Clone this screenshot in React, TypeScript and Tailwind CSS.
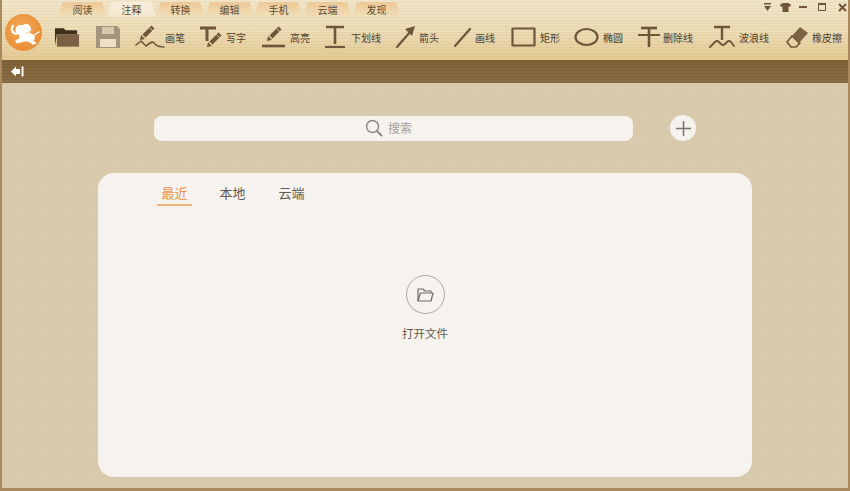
import React from "react"

const font = "font-['Noto_Sans_CJK_SC','Noto_Sans',sans-serif]"
const brown = "#6f5639"

const tabs = ["阅读", "注释", "转换", "编辑", "手机", "云端", "发现"]

const Ink: React.FC<{ w?: number; h?: number; children: React.ReactNode; sw?: number }> = ({ w = 30, h = 26, sw = 2.2, children }) => (
    <svg width={w} height={h} viewBox={`0 0 ${w} ${h}`} fill="none" stroke={brown} strokeWidth={sw} strokeLinecap="round" strokeLinejoin="round">
        {children}
    </svg>
)

// small slanted pencil, used by a few of the tools
const Pencil: React.FC<{ x: number; y: number }> = ({ x, y }) => (
    <g transform={`translate(${x} ${y})`}>
        <path d="M0 15 L1 10 L5 14 Z" fill={brown} stroke="none" />
        <path d="M4 11 L13 2" stroke={brown} strokeWidth={4.2} strokeLinecap="butt" />
        <path d="M9.5 2.5 L13.5 6.5" stroke="#e9d8b0" strokeWidth={0.9} strokeLinecap="butt" />
    </g>
)

const tools: { label: string; w: number; cell: number; icon: React.ReactNode }[] = [
    {
        label: "画笔", w: 64, cell: 30,
        icon: <Ink><Pencil x={5} y={1} /><path d="M1 21 L6 17 L11 22 L15 19 Q18 17 20 20 Q23 23 29 23" strokeWidth={1.6} /></Ink>,
    },
    {
        label: "写字", w: 62, cell: 27,
        icon: <Ink w={25}><path d="M1 4 H17 M8 4 V17" strokeWidth={3} strokeLinecap="butt" /><Pencil x={8} y={8} /></Ink>,
    },
    {
        label: "高亮", w: 63, cell: 29,
        icon: <Ink w={25}><Pencil x={6} y={2} /><path d="M1 22 H24" strokeWidth={2.6} strokeLinecap="butt" /></Ink>,
    },
    {
        label: "下划线", w: 71, cell: 27,
        icon: <Ink w={22}><path d="M2 3 H20 M11 3 V20" strokeWidth={2.6} strokeLinecap="butt" /><path d="M1 23 H21" strokeWidth={2.2} strokeLinecap="butt" /></Ink>,
    },
    {
        label: "箭头", w: 58, cell: 24,
        icon: <Ink w={21}><path d="M2 23 L16 7" strokeWidth={2.2} /><path d="M10 5 L20 2 L17 12 Z" fill={brown} stroke="none" /></Ink>,
    },
    {
        label: "画线", w: 58, cell: 22,
        icon: <Ink w={19}><path d="M2 22 L17 5" strokeWidth={2.2} /></Ink>,
    },
    {
        label: "矩形", w: 63, cell: 29,
        icon: <Ink w={25}><rect x="1.5" y="4.5" width="22" height="17" strokeWidth={2.2} strokeLinecap="butt" /></Ink>,
    },
    {
        label: "椭圆", w: 64, cell: 29,
        icon: <Ink w={25}><ellipse cx="12.5" cy="13" rx="11" ry="8" /></Ink>,
    },
    {
        label: "删除线", w: 71, cell: 25,
        icon: <Ink w={22}><path d="M3 4 H19" strokeWidth={2.6} strokeLinecap="butt" /><path d="M0 11 H22" strokeWidth={2} strokeLinecap="butt" /><path d="M11 4 V23" strokeWidth={2.6} strokeLinecap="butt" /></Ink>,
    },
    {
        label: "波浪线", w: 76, cell: 30,
        icon: <Ink w={26}><path d="M5 3 H21 M13 3 V16" strokeWidth={2.4} strokeLinecap="butt" /><path d="M1 23 L6 18 Q8 16 10 18 L12 20 Q14 22 16 20 L18 18 Q20 16 22 18 L25 22" strokeWidth={1.8} /></Ink>,
    },
    {
        label: "橡皮擦", w: 63, cell: 27,
        icon: <Ink w={24}><path d="M7 12 L15 3 L23 9 L14 19 Z" fill="#7d6444" stroke="none" /><path d="M7 12 L2 18 L6 23 H11 L15 19" strokeWidth={1.6} /><path d="M7 12 L14 19" strokeWidth={1.2} /></Ink>,
    },
]

const App: React.FC = () => {
    return (
        <div className={`w-[850px] h-[491px] overflow-hidden border-x-2 border-b-[3px] border-[#a98a5c] flex flex-col bg-[#d9caae] ${font}`}>
            {/* ribbon */}
            <div className="h-[60px] shrink-0 relative border-t-2 border-[#efe3c8] bg-[repeating-linear-gradient(0deg,rgba(120,90,40,0.06)_0px,rgba(120,90,40,0.06)_1px,transparent_1px,transparent_3px),linear-gradient(180deg,#f1e5c8_0%,#ecdcb5_50%,#e3ca93_100%)]">
                <div className="flex pl-[56px] h-[15px]">
                    {tabs.map((t) => (
                        <div
                            key={t}
                            className={`w-[49px] h-[15px] flex items-center justify-center text-[10px] text-[#5d4c36] [clip-path:polygon(10%_0,90%_0,100%_100%,0_100%)] ${t === "注释" ? "bg-[linear-gradient(180deg,#f7efdc,#f3e7cd)]" : "bg-[linear-gradient(180deg,#efc896,#efdfba)]"}`}
                        >
                            {t}
                        </div>
                    ))}
                </div>

                <div className="absolute right-[1px] -top-[2px] flex items-center gap-[8px] h-[14px]">
                    <svg width="9" height="9" viewBox="0 0 9 9" fill={brown}><path d="M1 0 H8 V1.5 H1 Z M1 3 H8 L4.5 8 Z" /></svg>
                    <svg width="11" height="9" viewBox="0 0 11 9" fill={brown}><path d="M0 1.5 L3 0 H8 L11 1.5 L10 4 L8.5 3.5 V9 H2.5 V3.5 L1 4 Z" /></svg>
                    <div className="w-[8px] h-[2px] bg-[#6f5639]" />
                    <div className="w-[8px] h-[8px] ml-[3px] border border-t-2 border-[#6f5639]" />
                    <svg width="9" height="9" viewBox="0 0 9 9" stroke={brown} strokeWidth="2" className="ml-[4px]"><path d="M1 1 L8 8 M8 1 L1 8" /></svg>
                </div>

                <div className="flex items-center h-[40px] pl-[3px]">
                    <div className="w-[37px] h-[37px] -mt-[9px] rounded-full shrink-0 bg-[radial-gradient(circle_at_45%_40%,#f3aa58,#e98d35_75%,#dc7d28)]">
                        <svg width="37" height="37" viewBox="0 0 37 37" fill="#fff">
                            <path d="M14 19 Q8 21 7 16 Q6.5 13 8 12" fill="none" stroke="#fff" strokeWidth="2.2" strokeLinecap="round" />
                            <ellipse cx="15.5" cy="16" rx="5" ry="5" />
                            <ellipse cx="22" cy="23" rx="8" ry="4.5" transform="rotate(10 22 23)" />
                            <ellipse cx="21" cy="15" rx="5" ry="5" />
                            <path d="M20 19 Q23 20 25 17" fill="none" stroke="#f3c48c" strokeWidth="0.8" />
                            <path d="M16 23 L10 27 L12 29.5 L21 27 Z" />
                            <path d="M26 25 L32 29 L28 31 L23 27 Z" />
                            <path d="M29 21 L34 18" stroke="#fff" strokeWidth="1.4" strokeLinecap="round" />
                        </svg>
                    </div>
                    <div className="w-[12px] shrink-0" />
                    <svg width="26" height="22" viewBox="0 0 27 22" className="shrink-0">
                        <path d="M1 2 H10 L12 4 H24 V8 H3 L1 20 Z" fill="#3f2f1d" />
                        <path d="M3 8 H26 V21 H3 Z" fill="#7b6143" />
                    </svg>
                    <div className="w-[16px] shrink-0" />
                    <svg width="24" height="22" viewBox="0 0 24 22" className="shrink-0">
                        <path d="M0 0 H21 L24 3 V22 H0 Z" fill="#a3957d" />
                        <path d="M6 1 H18 V8 H6 Z" fill="#d6c8ab" />
                        <path d="M4 13 H20 V21 H4 Z" fill="#ece0c6" />
                    </svg>
                    <div className="w-[15px] shrink-0" />
                    {tools.map((tool) => (
                        <div key={tool.label} className="flex items-center shrink-0" style={{ width: tool.w }}>
                            <div className="shrink-0" style={{ width: tool.cell }}>{tool.icon}</div>
                            <span className="text-[10px] text-[#4d4030] whitespace-nowrap">{tool.label}</span>
                        </div>
                    ))}
                </div>
            </div>

            {/* brown strip */}
            <div className="h-[23px] shrink-0 flex items-center pl-[9px] bg-[repeating-linear-gradient(0deg,rgba(60,40,10,0.12)_0px,rgba(60,40,10,0.12)_1px,transparent_1px,transparent_3px),linear-gradient(180deg,#7f6238,#8a6d45)]">
                <svg width="13" height="11" viewBox="0 0 13 11" fill="#fff"><path d="M0 5.5 L5 0.5 V3 H9 V8 H5 V10.5 Z" /><rect x="10.5" y="0.5" width="2" height="10" /></svg>
            </div>

            {/* search and card sit on a faint paper grain */}
            <div className="flex-1 flex flex-col bg-[radial-gradient(rgba(120,95,55,0.05)_1px,transparent_1px)] bg-[length:3px_3px]">
                <div className="flex items-center mt-[32px] pl-[152px]">
                    <div className="w-[479px] h-[25px] rounded-lg bg-[#f6f3ee] flex items-center justify-center pr-[10px] gap-[5px]">
                        <svg width="18" height="18" viewBox="0 0 18 18" fill="none" stroke="#8b8781" strokeWidth="1.5" strokeLinecap="round">
                            <circle cx="7.5" cy="7.5" r="6" />
                            <path d="M12 12 L16.5 16.5" strokeWidth="2" />
                        </svg>
                        <span className="text-[12px] text-[#a3a09a]">搜索</span>
                    </div>
                    <div className="w-[26px] h-[26px] ml-[37px] rounded-full bg-[#f6f3ee] flex items-center justify-center">
                        <svg width="15" height="15" viewBox="0 0 15 15" stroke="#77736c" strokeWidth="1.5"><path d="M7.5 0 V15 M0 7.5 H15" /></svg>
                    </div>
                </div>

                {/* recent files card */}
                <div className="mt-[32px] ml-[96px] w-[654px] h-[304px] rounded-2xl bg-[#f6f3ee] flex flex-col">
                    <div className="flex pl-[59px] pt-[9px] text-[13px] text-[#5f5a53]">
                        <div className="w-[35px] h-[24px] border-b-2 border-[#f3b27a] text-[#ee9444] text-center leading-[21px]">最近</div>
                        <div className="ml-[23px] w-[35px] text-center leading-[21px]">本地</div>
                        <div className="ml-[24px] w-[35px] text-center leading-[21px]">云端</div>
                    </div>
                    <div className="flex flex-col items-center mt-[69px]">
                        <div className="w-[39px] h-[39px] rounded-full border border-[#aba69e] flex items-center justify-center">
                            <svg width="17" height="14" viewBox="0 0 17 14" fill="none" stroke="#6e6a64" strokeWidth="1.2" strokeLinejoin="round">
                                <path d="M1 13 V1 H6 L8 3 H14 V5" />
                                <path d="M1 13 L3.5 5 H16 L14 13 Z" />
                            </svg>
                        </div>
                        <div className="mt-[11px] text-[11.5px] text-[#5f5a53] leading-[16px]">打开文件</div>
                    </div>
                </div>
            </div>
        </div>
    )
}

export default App
